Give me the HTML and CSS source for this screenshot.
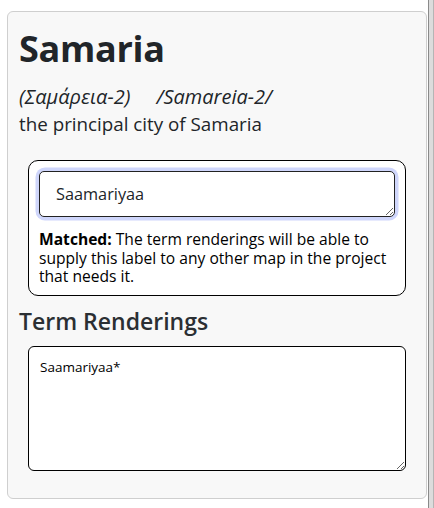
FILE: index.html
```html
<!DOCTYPE html>
<html>
<head>
<meta charset="utf-8">
<link rel="stylesheet" href="styles.css">
</head>
<body>
<div class="layout">
  <div class="pane">
    <div class="card">
      <h1 class="title">Samaria</h1>
      <div class="forms"><span class="gloss">(Σαμάρεια-2)</span><span class="gloss translit">/Samareia-2/</span></div>
      <div class="desc">the principal city of Samaria</div>
      <div class="vernbox">
        <div class="focusring"><textarea class="vern" rows="1">Saamariyaa</textarea></div>
        <p class="status"><b class="label">Matched:</b> <span>The term renderings will be able to supply this label to any other map in the project that needs it.</span></p>
      </div>
      <h2 class="subhead">Term Renderings</h2>
      <textarea class="renderings">Saamariyaa*</textarea>
    </div>
  </div>
  <div class="splitter"></div>
</div>
</body>
</html>
```
FILE: styles.css
```css
* { box-sizing: border-box; }
html, body { margin: 0; padding: 0; background: #fff; }
body { font-family: "Open Sans", "Noto Sans", sans-serif; color: #212529; }
.layout { display: flex; height: 508px; }
.pane { flex: 1; padding: 11px 0 0 7px; }
.splitter { width: 6px; margin-left: 1px; background: #dcdcdc; border-left: 1px solid #8a8a8a; border-right: 1px solid #b5b5b5; }
.card {
  width: 420px; height: 488px;
  background: #f8f8f8; border: 1px solid #cfcfcf; border-radius: 6px;
  padding: 14px 20px 0 11px;
}
.title { margin: 0; font-size: 36px; font-weight: 700; line-height: 46px; letter-spacing: -0.3px; }
.forms { margin-top: 12px; font-size: 20px; line-height: 26px; font-style: italic; }
.translit { margin-left: 26px; }
.desc { font-size: 18.8px; line-height: 26px; margin-top: 1px; }
.vernbox {
  margin: 23px 0 0 9px; background: #fff; border: 1px solid #000; border-radius: 10px;
  padding: 10px 10px 9px 10px;
}
.focusring { border-radius: 6px; box-shadow: 0 0 0 3.5px #cfd6fb; }
.vern {
  display: block; width: 100%; height: 46px; resize: vertical;
  border: 1px solid #222; border-radius: 5px; outline: none;
  font-family: inherit; font-size: 16.3px; color: #212529;
  padding: 9px 16px; line-height: 26px;
}
.status { margin: 13px 0 0 0; font-size: 15.6px; line-height: 18.5px; color: #000; }
.label { font-weight: 700; }
.subhead { margin: 10px 0 0 0; font-size: 23px; font-weight: 600; line-height: 30px; color: #2b2f33; }
.renderings {
  display: block; margin: 10px 0 0 9px; width: 378px; height: 125px;
  border: 1px solid #000; border-radius: 6px; background: #fff;
  font-family: inherit; font-size: 13.5px; color: #000;
  padding: 11px 11px; line-height: 18px; resize: vertical;
}
```
